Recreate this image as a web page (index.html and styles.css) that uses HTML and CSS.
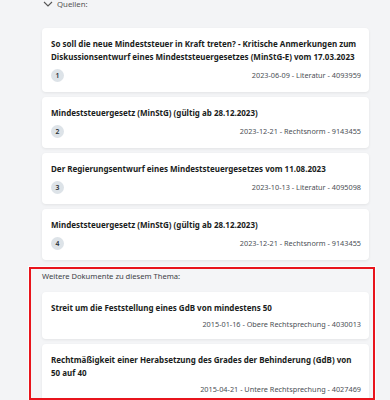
FILE: index.html
```html
<!DOCTYPE html>
<html lang="de">
<head>
<meta charset="utf-8">
<link rel="stylesheet" href="styles.css">
</head>
<body>
<div class="page">
  <div class="sources-head">
    <svg class="chev" width="10" height="6" viewBox="0 0 10 6"><path d="M1 1 L5 5 L9 1" fill="none" stroke="#555" stroke-width="1.1"/></svg>
    <span>Quellen:</span>
  </div>
  <div class="list">
    <div class="card">
      <div class="title">So soll die neue Mindeststeuer in Kraft treten? - Kritische Anmerkungen zum Diskussionsentwurf eines Mindeststeuergesetzes (MinStG-E) vom 17.03.2023</div>
      <div class="meta-row"><span class="badge">1</span><span class="meta">2023-06-09 - Literatur - 4093959</span></div>
    </div>
    <div class="card">
      <div class="title">Mindeststeuergesetz (MinStG) (gültig ab 28.12.2023)</div>
      <div class="meta-row"><span class="badge">2</span><span class="meta">2023-12-21 - Rechtsnorm - 9143455</span></div>
    </div>
    <div class="card">
      <div class="title">Der Regierungsentwurf eines Mindeststeuergesetzes vom 11.08.2023</div>
      <div class="meta-row"><span class="badge">3</span><span class="meta">2023-10-13 - Literatur - 4095098</span></div>
    </div>
    <div class="card">
      <div class="title">Mindeststeuergesetz (MinStG) (gültig ab 28.12.2023)</div>
      <div class="meta-row"><span class="badge">4</span><span class="meta">2023-12-21 - Rechtsnorm - 9143455</span></div>
    </div>
  </div>
  <section class="related">
    <div class="related-label">Weitere Dokumente zu diesem Thema:</div>
    <div class="list">
      <div class="card">
        <div class="title">Streit um die Feststellung eines GdB von mindestens 50</div>
        <div class="meta-row plain"><span class="meta">2015-01-16 - Obere Rechtsprechung - 4030013</span></div>
      </div>
      <div class="card">
        <div class="title">Rechtmäßigkeit einer Herabsetzung des Grades der Behinderung (GdB) von 50 auf 40</div>
        <div class="meta-row plain"><span class="meta">2015-04-21 - Untere Rechtsprechung - 4027469</span></div>
      </div>
    </div>
  </section>
</div>
</body>
</html>
```

FILE: styles.css
```css
html, body {
  margin: 0;
  padding: 0;
  background: #f3f4f6;
  font-family: "Noto Sans", "Open Sans", sans-serif;
  color: #1f2328;
}
.page {
  padding: 0 21px 0 42px;
}
.sources-head {
  display: flex;
  align-items: center;
  gap: 4px;
  height: 9px;
  margin-top: -1px;
  margin-bottom: 20px;
  padding-left: 1px;
  font-size: 7.8px;
  line-height: 10px;
  color: #555;
}
.chev {
  display: block;
}
.list {
  display: flex;
  flex-direction: column;
  gap: 5px;
}
.card {
  background: #fff;
  border-radius: 4px;
  box-shadow: 0 1px 3px rgba(0, 0, 0, 0.07);
  padding: 9px 8px 10px 9px;
}
.title {
  font-size: 8px;
  font-weight: 700;
  line-height: 13px;
  color: #1a1d21;
}
.meta-row {
  margin-top: 6px;
  display: flex;
  align-items: center;
  justify-content: space-between;
  height: 13px;
}
.meta-row.plain {
  height: 9px;
  justify-content: flex-end;
}
.badge {
  width: 13px;
  height: 13px;
  border-radius: 50%;
  background: #dde3e8;
  color: #2a2f35;
  font-size: 6.8px;
  font-weight: 600;
  line-height: 13px;
  text-align: center;
}
.meta {
  font-size: 7.3px;
  line-height: 9px;
  color: #4b4f55;
}
.related {
  box-sizing: border-box;
  height: 133px;
  overflow: hidden;
  margin: 7px -6px 0 -13px;
  border: 2px solid #e8141c;
  box-shadow: 0 0 0 1px rgba(255, 255, 255, 0.8);
  padding: 2px 4px 0 11px;
  background: #f4f5f7;
}
.related-label {
  font-size: 7.6px;
  line-height: 10px;
  color: #3d4146;
  margin-bottom: 11px;
}
```
